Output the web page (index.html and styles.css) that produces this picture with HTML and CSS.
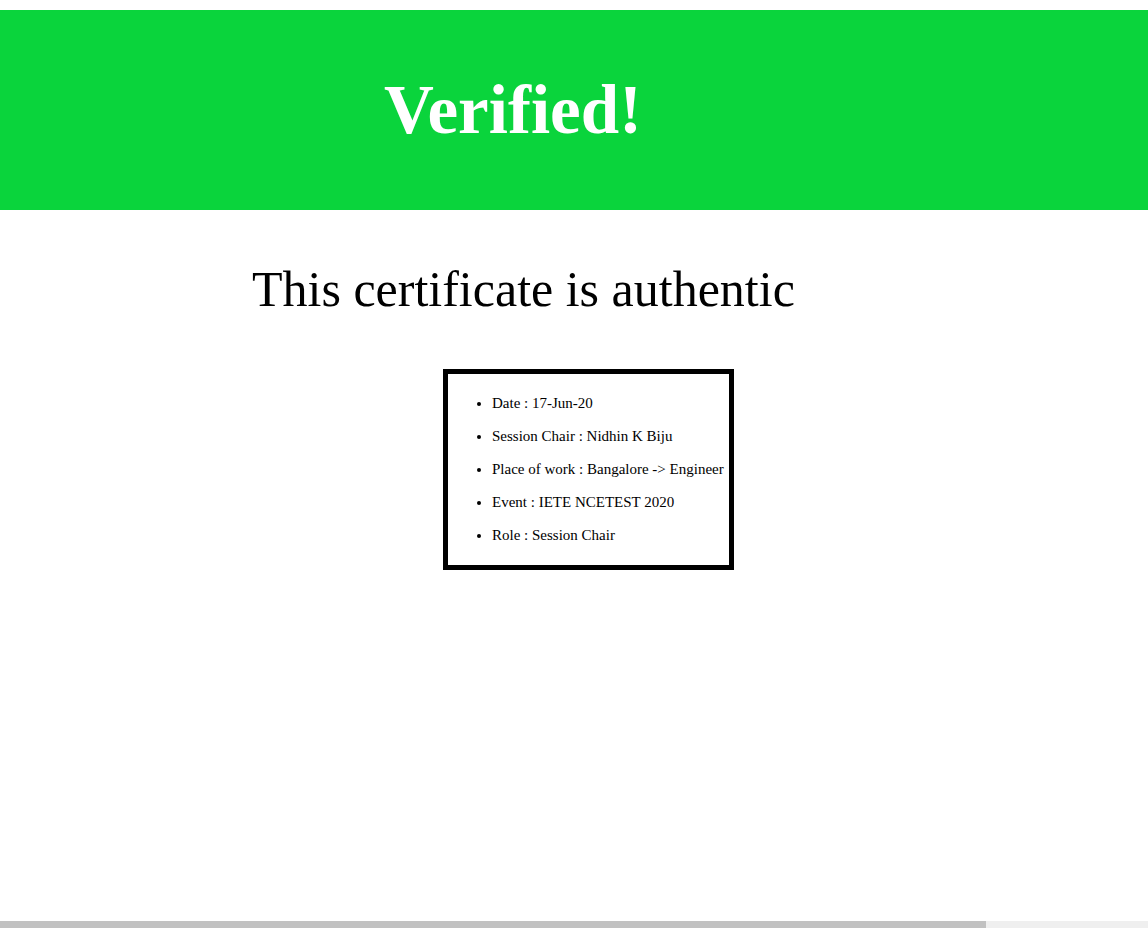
FILE: index.html
```html
<!DOCTYPE html>
<html>
<head>
<meta charset="utf-8">
<title>Verified</title>
<link rel="stylesheet" href="styles.css">
</head>
<body>
<header class="banner">
  <h1 class="banner-title">Verified!</h1>
</header>
<main class="content">
  <h2 class="subtitle">This certificate is authentic</h2>
  <div class="details">
    <ul class="details-list">
      <li>Date : 17-Jun-20</li>
      <li>Session Chair : Nidhin K Biju</li>
      <li>Place of work : Bangalore -&gt; Engineer</li>
      <li>Event : IETE NCETEST 2020</li>
      <li>Role : Session Chair</li>
    </ul>
  </div>
</main>
<div class="hscroll"><div class="hscroll-thumb"></div></div>
</body>
</html>
```
FILE: styles.css
```css
html, body {
  margin: 0;
  padding: 0;
  background: #fff;
}
body {
  font-family: "Liberation Serif", "Times New Roman", serif;
  color: #000;
}
.banner {
  margin-top: 10px;
  height: 200px;
  background: #0ad43c;
  display: flex;
  align-items: center;
  padding-left: 384px;
  box-sizing: border-box;
}
.banner-title {
  margin: 0;
  color: #fff;
  font-size: 69px;
  line-height: 69px;
  font-weight: bold;
}
.content {
  display: flex;
  flex-direction: column;
  align-items: flex-start;
}
.subtitle {
  margin: 54px 0 0 252px;
  font-size: 50px;
  line-height: 50px;
  font-weight: normal;
}
.details {
  margin: 55px 0 0 443px;
  width: 291px;
  border: 5px solid #000;
  box-sizing: border-box;
}
.details-list {
  margin: 0;
  padding: 20px 0 21px 44px;
  font-size: 15px;
  line-height: 18px;
  white-space: nowrap;
}
.details-list li + li {
  margin-top: 15px;
}
.hscroll {
  position: fixed;
  left: 0;
  right: 0;
  bottom: 0;
  height: 7px;
  background: #efefef;
}
.hscroll-thumb {
  width: 986px;
  height: 100%;
  background: #c1c1c1;
}
```
